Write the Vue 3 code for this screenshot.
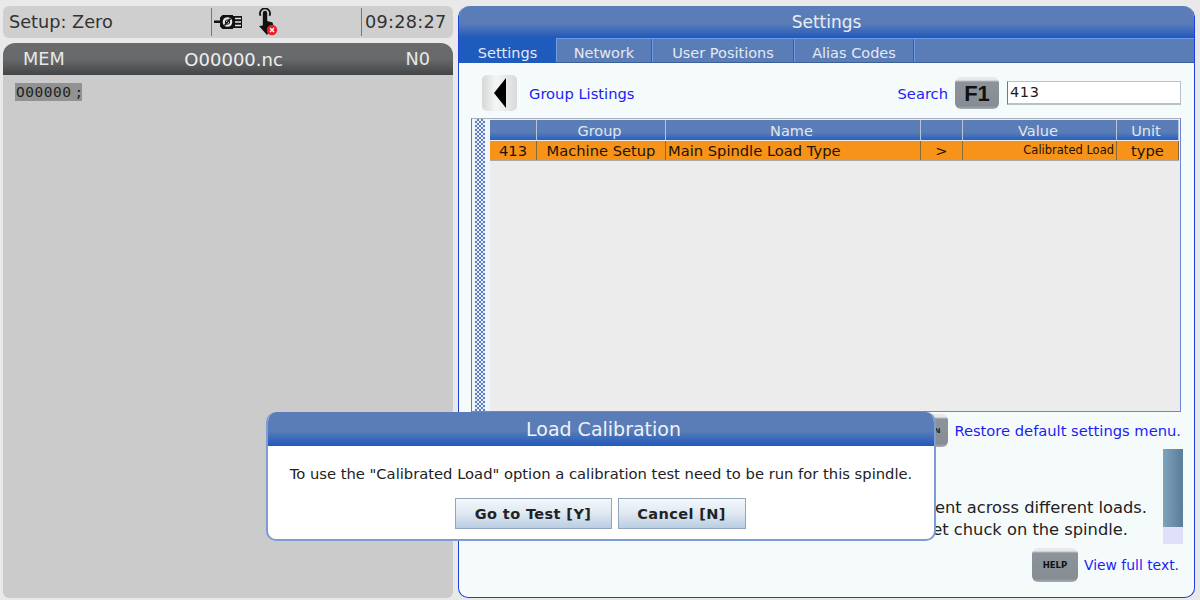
<script setup>
const tabs = ['Network', 'User Positions', 'Alias Codes']
</script>

<template>
  <div class="screen">
    <section class="left">
      <div class="status">
        <span class="mode">Setup: Zero</span>
        <div class="icons">
          <svg class="usb" width="29" height="14" viewBox="0 0 29 14">
            <path d="M0 5.5h6V2.5L8.5 0H19v14H8.5L6 11.5V8H0z" fill="#111" />
            <circle cx="13.5" cy="7" r="4.8" fill="#e6e6e6" />
            <path d="M10.5 10.5 16.5 3.5" stroke="#111" stroke-width="1.6" />
            <circle cx="13.5" cy="7" r="2.2" fill="none" stroke="#111" stroke-width="1" />
            <rect x="19" y="1" width="9" height="12" fill="#111" />
            <path d="M21 3.5h6M21 7h6M21 10.5h6" stroke="#e6e6e6" stroke-width="1.5" />
          </svg>
          <svg class="hand" width="21" height="28" viewBox="0 0 21 28">
            <path d="M3.6 7.8a5 5 0 1 1 8.8 0" fill="none" stroke="#111" stroke-width="1.8" />
            <path d="M5.8 5a2.2 2.2 0 0 1 4.4 0v8l5.3 1.5 1 3-6.5 9.5-8-9 3.8-.5z" fill="#111" />
            <circle cx="15" cy="22" r="5.2" fill="#e8202c" />
            <path d="M13 20l4 4M17 20l-4 4" stroke="#fff" stroke-width="1.3" />
          </svg>
        </div>
        <span class="clock">09:28:27</span>
      </div>
      <div class="program">
        <div class="program-head">
          <span>MEM</span>
          <span class="file">O00000.nc</span>
          <span>N0</span>
        </div>
        <div class="program-body">
          <span class="code">O00000 ;</span>
        </div>
      </div>
    </section>

    <section class="right">
      <h1 class="title">Settings</h1>
      <nav class="tabs">
        <span class="tab active">Settings</span>
        <span v-for="t in tabs" :key="t" class="tab" :class="'tab-' + t.length">{{ t }}</span>
        <span class="tab-rest"></span>
      </nav>
      <div class="content">
        <div class="toolbar">
          <div class="back"><i></i></div>
          <span class="link group-link">Group Listings</span>
          <span class="link search">Search</span>
          <div class="key f1">F1</div>
          <div class="input">413</div>
        </div>
        <div class="table">
          <div class="scroll"></div>
          <div class="grid-wrap">
            <div class="row head">
              <span></span><span>Group</span><span>Name</span><span></span><span>Value</span><span>Unit</span>
            </div>
            <div class="row sel">
              <span>413</span>
              <span>Machine Setup</span>
              <span class="name">Main Spindle Load Type</span>
              <span>&gt;</span>
              <span class="value">Calibrated Load</span>
              <span>type</span>
            </div>
          </div>
        </div>
        <div class="restore">
          <div class="key small">N</div>
          <span class="link">Restore default settings menu.</span>
        </div>
        <div class="desc">
          <div class="desc-text">
            <p>This setting keeps the spindle load reading consistent across different loads.</p>
            <p class="second">Run the calibration test with the target chuck on the spindle.</p>
            <p class="dots">..</p>
          </div>
          <div class="bar"><i></i></div>
        </div>
        <div class="help">
          <div class="key help-key">HELP</div>
          <span class="link full">View full text.</span>
        </div>
      </div>
    </section>

    <div class="dialog">
      <h2>Load Calibration</h2>
      <div class="dialog-body">
        <p>To use the "Calibrated Load" option a calibration test need to be run for this spindle.</p>
        <div class="buttons">
          <button class="go">Go to Test [Y]</button>
          <button class="cancel">Cancel [N]</button>
        </div>
      </div>
    </div>
  </div>
</template>

<style>
html, body { margin: 0; background: #e9e9e9; }
</style>

<style scoped>
.screen {
  position: relative;
  width: 1200px;
  height: 600px;
  box-sizing: border-box;
  padding: 6px 5px 2px 3px;
  display: flex;
  gap: 5px;
  overflow: hidden;
  background: #e9e9e9;
  font-family: "DejaVu Sans", sans-serif;
  color: #1a1a1a;
}
.left { width: 450px; flex: none; display: flex; flex-direction: column; gap: 5px; }
.status {
  height: 32px;
  background: #cfcfcf;
  border-radius: 6px;
  display: flex;
  align-items: center;
  font-size: 17.7px;
  color: #333;
}
.mode { width: 208px; padding-left: 6px; box-sizing: border-box; white-space: nowrap; }
.icons {
  width: 151px;
  height: 28px;
  box-sizing: border-box;
  border-left: 1px solid #777;
  border-right: 1px solid #777;
  display: flex;
  align-items: flex-start;
  padding-left: 2px;
  gap: 14px;
}
.usb { margin-top: 7px; }
.clock { padding-left: 3px; letter-spacing: 0.25px; }
.program { flex: 1; display: flex; flex-direction: column; }
.program-head {
  height: 32px;
  border-radius: 12px 12px 0 0;
  background: linear-gradient(#6a6b6d 0%, #68696b 50%, #434446 100%);
  color: #e8e8e8;
  display: flex;
  align-items: center;
  justify-content: space-between;
  padding: 0 23px 0 20px;
  font-size: 17.7px;
}
.file { font-size: 18px; margin-left: -3px; color: #efefef; }
.program-body {
  flex: 1;
  background: #cbcbcb;
  border-radius: 0 0 6px 6px;
  padding: 7px 12px;
}
.code {
  display: inline-block;
  background: #929292;
  font-family: "DejaVu Sans Mono", monospace;
  font-size: 14.5px;
  line-height: 18px;
  width: 67px;
  white-space: nowrap;
  padding-left: 1px;
  box-sizing: border-box;
  color: #222;
  letter-spacing: 0.5px;
  word-spacing: -6px;
}
.right {
  flex: 1;
  display: flex;
  flex-direction: column;
  border: 1px solid #1d3fe0;
  border-top: 0;
  border-radius: 12px 12px 10px 10px;
  background: #f5fbfb;
  overflow: hidden;
}
.title {
  margin: 0;
  height: 32px;
  line-height: 32px;
  text-align: center;
  font-weight: 400;
  font-size: 17px;
  color: #e8eef6;
  background: linear-gradient(#5a7db7 0%, #5a7db7 55%, #2058bb 100%);
}
.tabs {
  height: 25px;
  display: flex;
  background: #5a7db7;
  font-size: 14.5px;
  color: #e3e9f3;
  border-top: 1px solid #6e9ce8;
  box-sizing: border-box;
  border-bottom: 1px solid #3d5f98;
}
.tab {
  width: 96px;
  box-sizing: border-box;
  text-align: center;
  line-height: 28px;
  overflow: hidden;
  border-left: 1px solid #6e9ce8;
  border-right: 1px solid #3d5f98;
}
.tab.active {
  width: 97px;
  background: #1f5bbd;
  border: 0;
  margin-top: -1px;
  line-height: 30px;
  height: 25px;
}
.tab-14 { width: 142px; }
.tab-11 { width: 120px; }
.tab-rest { flex: 1; border-left: 1px solid #6e9ce8; }
.content {
  flex: 1;
  display: flex;
  flex-direction: column;
  padding: 0 12px;
  position: relative;
}
.toolbar {
  height: 55px;
  box-sizing: border-box;
  padding: 4px 1px 0 0;
  display: flex;
  align-items: center;
  font-size: 14.7px;
}
.link { color: #1c1cf5; font-size: 14.7px; white-space: nowrap; }
.toolbar .link { padding-top: 1px; }
.back {
  width: 35px;
  height: 36px;
  margin-left: 11px;
  border-radius: 5px;
  background: linear-gradient(90deg, #d6d8d8, #f4f5f5 40%, #d9dbdb);
  display: flex;
  align-items: center;
  justify-content: center;
  box-sizing: border-box;
}
.back i {
  width: 0;
  height: 0;
  border-style: solid;
  border-width: 15px 12px 15px 0;
  border-color: transparent #000 transparent transparent;
}
.group-link { margin-left: 12px; }
.search { margin-left: auto; }
.key {
  background: linear-gradient(#e8e9ea 0, #e8e9ea 3px, #8d939b 5px, #878d95 90%, #a8acb2 100%);
  border-radius: 6px;
  color: #111;
  font-family: "Liberation Sans", sans-serif;
  font-weight: 700;
  display: flex;
  align-items: center;
  justify-content: center;
  box-sizing: border-box;
}
.f1 { width: 44px; height: 32px; font-size: 22px; margin: 0 8px 0 7px; padding-top: 3px; }
.input {
  width: 174px;
  height: 24px;
  background: #fff;
  border: 1px solid #b9c0c8;
  border-left-color: #6e7a86;
  border-bottom-width: 2px;
  box-sizing: border-box;
  font-size: 14.5px;
  line-height: 20px;
  padding-left: 2px;
  letter-spacing: 0.6px;
}
.table {
  height: 294px;
  width: 710px;
  box-sizing: border-box;
  background: #ececec;
  border: 1px solid #5a7db7;
  border-top-color: #a9b1bb;
  border-bottom-color: #6b85d8;
  border-right-color: #6b85d8;
  display: flex;
  overflow: hidden;
}
.scroll {
  width: 18px;
  flex: none;
  box-sizing: border-box;
  border-left: 3px solid #eff5f8;
  border-right: 5px solid #eff5f8;
  background-color: #c9d3e8;
  background-image: conic-gradient(#5f80c4 25%, #e6ecf7 0 50%, #5f80c4 0 75%, #e6ecf7 0);
  background-size: 4px 4px;
}
.grid-wrap { flex: 1; padding-top: 1px; }
.row {
  display: grid;
  grid-template-columns: 47px 129px 255px 42px 154px 62px;
  font-size: 14.7px;
  text-align: center;
  box-sizing: border-box;
  height: 20px;
  line-height: 21px;
  margin-right: 1px;
}
.row span { white-space: nowrap; overflow: hidden; box-sizing: border-box; }
.head {
  background: linear-gradient(#5a7db7 0%, #5a7db7 60%, #2a60bd 100%);
  color: #dfe6f1;
  line-height: 23px;
}
.head span { border-right: 1px solid #b8c4d6; padding-right: 3px; font-size: 14.5px; }
.sel {
  margin-top: 1px;
  background: #f79319;
  color: #1d1405;
  border-bottom: 1px solid #a9a9a9;
  line-height: 19px;
}
.sel span { border-right: 1px solid #8a6a3a; }
.sel .name { text-align: left; padding-left: 2px; }
.sel .value { text-align: right; font-size: 11.5px; padding-right: 2px; }
.restore {
  height: 37px;
  display: flex;
  align-items: center;
  justify-content: flex-end;
  gap: 6px;
  padding-right: 1px;
}
.small { width: 22px; height: 33px; font-size: 8px; }
.desc {
  display: flex;
  justify-content: flex-end;
  height: 95px;
  margin-right: -1px;
}
.desc-text {
  position: relative;
  width: 600px;
  overflow: hidden;
  text-align: right;
  padding: 48px 16px 0 0;
  box-sizing: border-box;
  font-size: 16.3px;
  color: #222;
  line-height: 22px;
  white-space: nowrap;
  flex: 1;
}
.desc-text p { margin: 0; }
.second { padding-right: 19px; }
.dots {
  position: absolute;
  left: 36px;
  top: 76px;
  font-size: 7px;
}
.bar {
  width: 20px;
  height: 95px;
  background: #e0e0fb;
}
.bar i {
  display: block;
  height: 78px;
  background: linear-gradient(90deg, #7da3bd, #5c7c99);
}
.help {
  display: flex;
  align-items: center;
  justify-content: flex-end;
  gap: 6px;
  padding-right: 3px;
  margin-top: 4px;
}
.full { font-size: 13.9px; }
.help-key { width: 46px; height: 34px; font-size: 8.5px; font-family: "DejaVu Sans", sans-serif; }
.dialog {
  position: absolute;
  left: 266px;
  top: 412px;
  width: 670px;
  height: 129px;
  box-sizing: border-box;
  background: #fff;
  border: 2px solid #7d9bd4;
  border-top: 0;
  border-radius: 10px;
  overflow: hidden;
}
.dialog h2 {
  margin: 0;
  height: 34px;
  line-height: 34px;
  text-align: center;
  font-size: 19px;
  font-weight: 400;
  color: #eef2f8;
  padding-left: 5px;
  background: linear-gradient(#5a7db7 0%, #5a7db7 55%, #2058bb 100%);
}
.dialog-body { padding-top: 19px; text-align: center; }
.dialog-body p {
  margin: 0;
  font-size: 14.74px;
  line-height: 18px;
  color: #222;
  white-space: nowrap;
}
.buttons {
  margin-top: 15px;
  display: flex;
  justify-content: center;
  gap: 6px;
  padding-right: 2px;
}
.buttons button {
  height: 31px;
  box-sizing: border-box;
  border: 1px solid #93a5bb;
  background: linear-gradient(#f4f7fb, #dfe8f2 50%, #b9cde2);
  font-family: "DejaVu Sans", sans-serif;
  font-weight: 700;
  font-size: 14.5px;
  color: #222;
  padding: 0;
  letter-spacing: 0.4px;
}
.go { width: 157px; }
.cancel { width: 128px; }
</style>
